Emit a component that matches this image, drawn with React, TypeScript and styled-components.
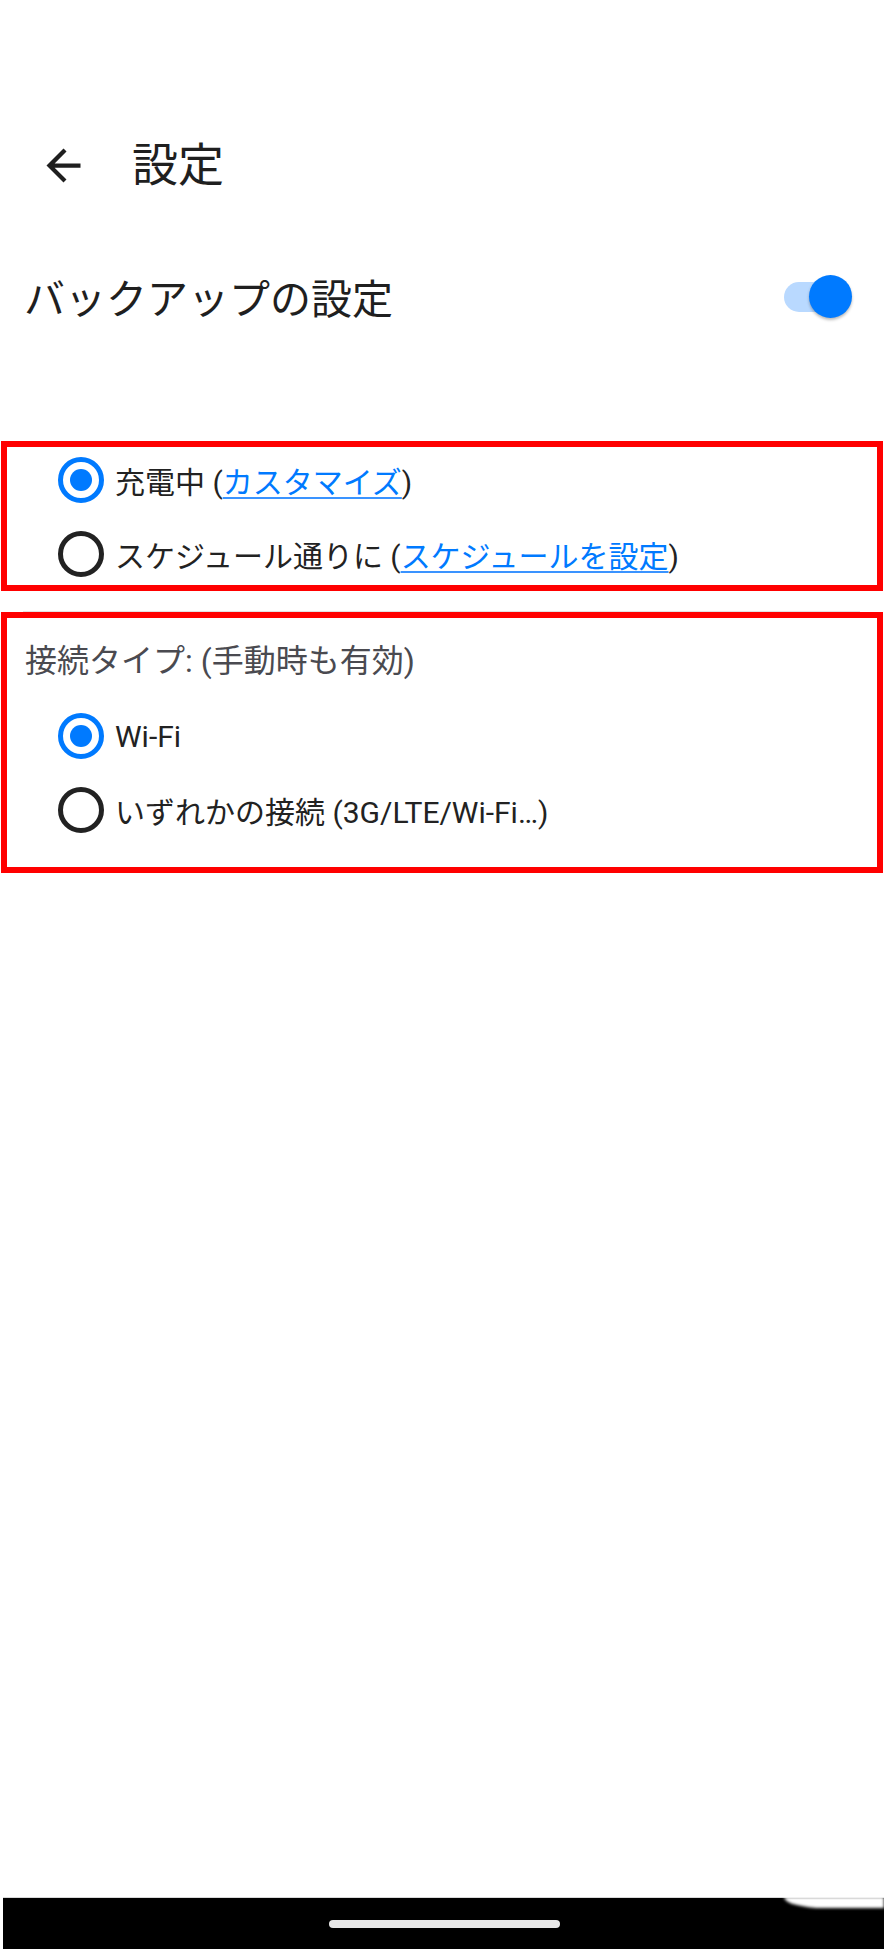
import React from "react";
import styled, { createGlobalStyle } from "styled-components";

const GlobalStyle = createGlobalStyle`
  html, body {
    margin: 0;
    padding: 0;
    background: #ffffff;
  }
  body {
    font-family: Roboto, "Noto Sans CJK JP", "Noto Sans", sans-serif;
    color: #222222;
    -webkit-font-smoothing: antialiased;
  }
  * { box-sizing: border-box; }
`;

const BLUE = "#007aff";

const Page = styled.div`
  position: relative;
  width: 884px;
  height: 1949px;
  display: flex;
  flex-direction: column;
  overflow: hidden;
  background: #ffffff;
`;

const StatusSpace = styled.div`
  height: 125px;
  flex: none;
`;

const Header = styled.header`
  height: 80px;
  display: flex;
  align-items: center;
  padding-left: 38px;
  flex: none;
`;

const BackButton = styled.button`
  width: 51px;
  height: 51px;
  padding: 0;
  border: none;
  background: transparent;
  display: flex;
  align-items: center;
  justify-content: center;
  color: #1f1f1f;
  cursor: pointer;
`;

const Title = styled.h1`
  margin: 0 0 0 43px;
  font-size: 46px;
  font-weight: 400;
  line-height: 1;
  color: #1f1f1f;
`;

const ToggleRow = styled.div`
  margin-top: 51px;
  height: 80px;
  display: flex;
  align-items: center;
  justify-content: space-between;
  padding: 0 32px 0 24px;
  flex: none;
`;

const ToggleLabel = styled.span`
  margin-top: 8px;
  font-size: 41px;
  line-height: 1;
  color: #1f1f1f;
`;

const Switch = styled.div`
  position: relative;
  width: 68px;
  height: 43px;
  flex: none;
`;

const SwitchTrack = styled.div<{ $on: boolean }>`
  position: absolute;
  left: 0;
  top: 7px;
  width: 66px;
  height: 30px;
  border-radius: 15px;
  background: ${(p) => (p.$on ? "#b9d9ff" : "#d0d0d0")};
`;

const SwitchThumb = styled.div<{ $on: boolean }>`
  position: absolute;
  top: 0;
  ${(p) => (p.$on ? "right: 0;" : "left: 0;")}
  width: 43px;
  height: 43px;
  border-radius: 50%;
  background: ${(p) => (p.$on ? BLUE : "#f5f5f5")};
  box-shadow: 0 2px 3px rgba(0, 0, 0, 0.28);
`;

const OptionBox = styled.section<{ $pad: string }>`
  margin: 0 1px;
  border: 6px solid #ff0000;
  display: flex;
  flex-direction: column;
  padding: ${(p) => p.$pad};
  flex: none;
`;

const FirstBox = styled(OptionBox)`
  margin-top: 105px;
  gap: 16px;
`;

const Divider = styled.div`
  margin: 20px 24px 0 23px;
  height: 1px;
  background: #e2e2e2;
  flex: none;
`;

const SectionHeader = styled.div`
  height: 80px;
  display: flex;
  align-items: center;
  padding-left: 18px;
  font-size: 32px;
  color: #4a4a50;
`;

const RadioGroup = styled.div`
  display: flex;
  flex-direction: column;
  gap: 16px;
  margin-top: 9px;
`;

const RadioRow = styled.label`
  height: 58px;
  display: flex;
  align-items: center;
  gap: 11px;
  padding-left: 51px;
  font-size: 30px;
  color: #222222;
  cursor: pointer;
`;

const RadioCircle = styled.span<{ $checked: boolean }>`
  width: 46px;
  height: 46px;
  border-radius: 50%;
  border: 5px solid ${(p) => (p.$checked ? BLUE : "#222222")};
  display: flex;
  align-items: center;
  justify-content: center;
  flex: none;

  &::after {
    content: "";
    width: 22px;
    height: 22px;
    border-radius: 50%;
    background: ${BLUE};
    display: ${(p) => (p.$checked ? "block" : "none")};
  }
`;

const Link = styled.a`
  color: ${BLUE};
  text-decoration: underline;
  text-decoration-thickness: 2px;
  text-underline-offset: 4px;
  text-decoration-color: #3a93ff;
`;

const Filler = styled.div`
  flex: 1;
`;

const NavBar = styled.nav`
  position: relative;
  height: 52px;
  margin-left: 3px;
  background: #000000;
  border-top: 1px solid #d8d8d8;
  display: flex;
  justify-content: center;
  flex: none;
  padding-left: 1px;
`;

const HomeHandle = styled.div`
  margin-top: 22px;
  width: 231px;
  height: 8px;
  border-radius: 4px;
  background: #e8e8e8;
`;

const CornerGlow = styled.div`
  position: absolute;
  top: -1px;
  right: 0;
  width: 100px;
  height: 11px;
  background: #ffffff;
  border-bottom-left-radius: 40px 11px;
  filter: blur(1.5px);
`;

const ArrowBack = () => (
  <svg width="51" height="51" viewBox="0 0 24 24" aria-hidden="true">
    <path
      fill="currentColor"
      d="M20 11H7.83l5.59-5.59L12 4l-8 8 8 8 1.41-1.41L7.83 13H20v-2z"
    />
  </svg>
);

type RadioProps = { checked: boolean; children: React.ReactNode };

const Radio = ({ checked, children }: RadioProps) => (
  <RadioRow>
    <RadioCircle $checked={checked} />
    <span>{children}</span>
  </RadioRow>
);

export default function App() {
  return (
    <>
      <GlobalStyle />
      <Page>
        <StatusSpace />
        <Header>
          <BackButton aria-label="戻る">
            <ArrowBack />
          </BackButton>
          <Title>設定</Title>
        </Header>

        <ToggleRow>
          <ToggleLabel>バックアップの設定</ToggleLabel>
          <Switch>
            <SwitchTrack $on />
            <SwitchThumb $on />
          </Switch>
        </ToggleRow>

        <FirstBox $pad="4px 0 2px">
          <Radio checked>
            充電中 (<Link>カスタマイズ</Link>)
          </Radio>
          <Radio checked={false}>
            スケジュール通りに (<Link>スケジュールを設定</Link>)
          </Radio>
        </FirstBox>

        <Divider />

        <OptionBox $pad="0 0 28px">
          <SectionHeader>接続タイプ: (手動時も有効)</SectionHeader>
          <RadioGroup>
            <Radio checked>Wi-Fi</Radio>
            <Radio checked={false}>いずれかの接続 (3G/LTE/Wi-Fi…)</Radio>
          </RadioGroup>
        </OptionBox>

        <Filler />

        <NavBar>
          <HomeHandle />
          <CornerGlow />
        </NavBar>
      </Page>
    </>
  );
}
